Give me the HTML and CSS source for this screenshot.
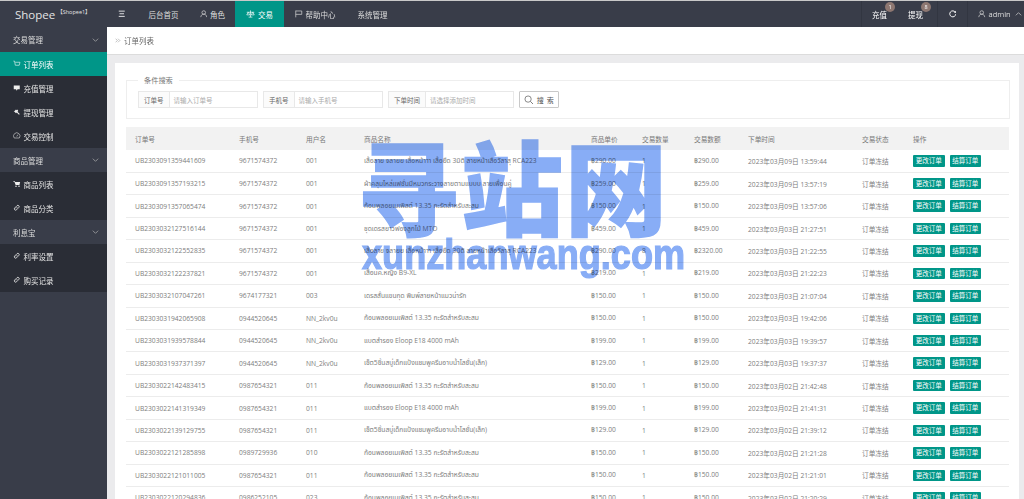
FILE: index.html
```html
<!DOCTYPE html>
<html lang="zh">
<head>
<meta charset="utf-8">
<title>Shopee</title>
<link rel="stylesheet" href="styles.css">
</head>
<body>
<div class="app">
  <header class="topbar">
    <div class="logo"><span class="logo-name">Shopee</span><span class="logo-sub">【Shopee1】</span></div>
    <nav class="nav">
      <a class="nav-toggle"><svg class="ic" viewBox="0 0 10 10"><path d="M1 1.5h8M2 5h6M1 8.5h8" fill="none" stroke="#fff" stroke-width="1.1"/></svg></a>
      <a class="nav-item">后台首页</a>
      <a class="nav-item"><svg class="ic" viewBox="0 0 10 10"><circle cx="5" cy="3.4" r="2.4" fill="none" stroke="#ddd" stroke-width=".9"/><path d="M1 9.5c.6-3 2-4 4-4s3.4 1 4 4" fill="none" stroke="#ddd" stroke-width=".9"/></svg>角色</a>
      <a class="nav-item active"><svg class="ic ic-wide" viewBox="0 0 12 10"><path d="M6 .5v9M1 3h10M3 3 1 6.5h4zM9 3 7 6.5h4zM3.5 9.5h5" fill="none" stroke="#fff" stroke-width=".9"/></svg>交易</a>
      <a class="nav-item"><svg class="ic" viewBox="0 0 10 10"><path d="M1 .8v9M1 1.300h8v4.500H1" fill="none" stroke="#ddd" stroke-width=".9"/></svg>帮助中心</a>
      <a class="nav-item">系统管理</a>
    </nav>
    <div class="tools">
      <a class="tool tool-text">充值<span class="badge">1</span></a>
      <a class="tool tool-text tool-joined">提现<span class="badge">8</span></a>
      <a class="tool tool-refresh"><svg class="ic" viewBox="0 0 10 10"><path d="M8.400 3A4 4 0 1 0 9 5.600" fill="none" stroke="#fff" stroke-width="1.300"/><path d="M9.600 .6v3.200H6.400z" fill="#fff"/></svg></a>
      <a class="tool tool-user"><svg class="ic" viewBox="0 0 10 10"><circle cx="5" cy="3.4" r="2.4" fill="none" stroke="#ddd" stroke-width=".9"/><path d="M1 9.5c.6-3 2-4 4-4s3.4 1 4 4" fill="none" stroke="#ddd" stroke-width=".9"/></svg>admin<svg class="chev-up" viewBox="0 0 10 6"><path d="M1 5 5 1l4 4" fill="none" stroke="#ddd" stroke-width="1"/></svg></a>
    </div>
  </header>
  <div class="body-row">
    <aside class="side">
      <div class="group group-first">交易管理<svg class="chev" viewBox="0 0 10 6"><path d="M1 1l4 4 4-4" fill="none" stroke="#bbb" stroke-width="1"/></svg></div>
      <a class="sub sub-active"><svg class="ic" viewBox="0 0 10 10"><path d="M.5 1.500h1.600l1 5.500h5.200l1-4H3" fill="none" stroke="#fff" stroke-width=".8"/></svg>订单列表</a>
      <a class="sub"><svg class="ic" viewBox="0 0 10 10"><path d="M1 2h8v5H6L5 9 4 7H1z" fill="#eee"/></svg>充值管理</a>
      <a class="sub"><svg class="ic" viewBox="0 0 10 10"><path d="M1 5l3-3 1 1 1-1 1 2-1 1 3 3-1 1-3-3-1 1-1-1-1-1z" fill="#eee"/></svg>提现管理</a>
      <a class="sub"><svg class="ic" viewBox="0 0 10 10"><path d="M1.600 8a4.300 4.300 0 1 1 6.800 0zM5 6l1.500-2.500" fill="none" stroke="#ddd" stroke-width=".8"/></svg>交易控制</a>
      <div class="group">商品管理<svg class="chev" viewBox="0 0 10 6"><path d="M1 1l4 4 4-4" fill="none" stroke="#bbb" stroke-width="1"/></svg></div>
      <a class="sub"><svg class="ic" viewBox="0 0 10 10"><path d="M.5 1.500h2l.4 1H9.500L8.600 6.500H3.500L2 2.500H.5z" fill="#eee"/><circle cx="4" cy="8.300" r="1" fill="#eee"/><circle cx="8" cy="8.300" r="1" fill="#eee"/></svg>商品列表</a>
      <a class="sub"><svg class="ic" viewBox="0 0 10 10"><path d="M4.200 5.800 5.800 4.200M3.800 3.800 5.300 2.300a1.600 1.600 0 0 1 2.400 2.400L6.200 6.200M3.800 3.800 2.300 5.300a1.600 1.600 0 0 0 2.400 2.400L6.200 6.200" fill="none" stroke="#eee" stroke-width="1.100"/></svg>商品分类</a>
      <div class="group">利息宝<svg class="chev" viewBox="0 0 10 6"><path d="M1 1l4 4 4-4" fill="none" stroke="#bbb" stroke-width="1"/></svg></div>
      <a class="sub"><svg class="ic" viewBox="0 0 10 10"><path d="M4.200 5.800 5.800 4.200M3.800 3.800 5.300 2.300a1.600 1.600 0 0 1 2.400 2.400L6.200 6.200M3.800 3.800 2.300 5.300a1.600 1.600 0 0 0 2.400 2.400L6.200 6.200" fill="none" stroke="#eee" stroke-width="1.100"/></svg>利率设置</a>
      <a class="sub"><svg class="ic" viewBox="0 0 10 10"><path d="M4.200 5.800 5.800 4.200M3.800 3.800 5.300 2.300a1.600 1.600 0 0 1 2.400 2.400L6.200 6.200M3.800 3.800 2.300 5.300a1.600 1.600 0 0 0 2.400 2.400L6.200 6.200" fill="none" stroke="#eee" stroke-width="1.100"/></svg>购买记录</a>
    </aside>
    <main class="main">
      <div class="crumb"><svg class="crumb-mark" viewBox="0 0 10 8"><path d="M1 1l3 3-3 3M5 1l3 3-3 3" fill="none" stroke="#999" stroke-width="1"/></svg>订单列表</div>
      <div class="content">
        <div class="panel">
          <fieldset class="search">
            <legend>条件搜索</legend>
            <div class="search-row">
              <div class="field f1"><span class="field-label">订单号</span><span class="field-input">请输入订单号</span></div>
              <div class="field f2"><span class="field-label">手机号</span><span class="field-input">请输入手机号</span></div>
              <div class="field f3"><span class="field-label">下单时间</span><span class="field-input">请选择添加时间</span></div>
              <button class="search-btn"><svg class="ic-search" viewBox="0 0 10 10"><circle cx="4.300" cy="4.300" r="3.300" fill="none" stroke="#666" stroke-width=".8"/><path d="M6.800 6.800 9.500 9.500" stroke="#666" stroke-width=".9"/></svg>搜 索</button>
            </div>
          </fieldset>
          <table class="orders">
            <colgroup>
              <col class="c1"><col class="c2"><col class="c3"><col class="c4"><col class="c5"><col class="c6"><col class="c7"><col class="c8"><col class="c9"><col class="c10">
            </colgroup>
            <thead>
              <tr><th>订单号</th><th>手机号</th><th>用户名</th><th>商品名称</th><th>商品单价</th><th>交易数量</th><th>交易数额</th><th>下单时间</th><th>交易状态</th><th>操作</th></tr>
            </thead>
            <tbody>
              <tr><td>UB2303091359441609</td><td>9671574372</td><td>001</td><td>เสื้อลาย จลายย เสื้อหน้าาา เสื้อยืด 3มิติ ลายหน้าเสือวัลาสุ RCA223</td><td>฿290.00</td><td>1</td><td>฿290.00</td><td>2023年03月09日 13:59:44</td><td>订单冻结</td><td class="ops"><a class="btn">更改订单</a><a class="btn">结算订单</a></td></tr>
              <tr><td>UB2303091357193215</td><td>9671574372</td><td>001</td><td>ผ้าคลุมไหล่แฟชั่นมีหมวกระวางลายตามแบบบ ลายเพื่อนคู่</td><td>฿259.00</td><td>1</td><td>฿259.00</td><td>2023年03月09日 13:57:19</td><td>订单冻结</td><td class="ops"><a class="btn">更改订单</a><a class="btn">结算订单</a></td></tr>
              <tr><td>UB2303091357065474</td><td>9671574372</td><td>001</td><td>ก้อนพลอยเมเพิสต์ 13.35 กะรัตสำหรับสะสม</td><td>฿150.00</td><td>1</td><td>฿150.00</td><td>2023年03月09日 13:57:06</td><td>订单冻结</td><td class="ops"><a class="btn">更改订单</a><a class="btn">结算订单</a></td></tr>
              <tr><td>UB2303032127516144</td><td>9671574372</td><td>001</td><td>ชุดเดรสยาวฟองลูกไม้ MTO</td><td>฿459.00</td><td>1</td><td>฿459.00</td><td>2023年03月03日 21:27:51</td><td>订单冻结</td><td class="ops"><a class="btn">更改订单</a><a class="btn">结算订单</a></td></tr>
              <tr><td>UB2303032122552835</td><td>9671574372</td><td>001</td><td>เสื้อลาย จลายย เสื้อหน้าาา เสื้อยืด 3มิติ ลายหน้าเสือวัลาสุ RCA223</td><td>฿290.00</td><td>8</td><td>฿2320.00</td><td>2023年03月03日 21:22:55</td><td>订单冻结</td><td class="ops"><a class="btn">更改订单</a><a class="btn">结算订单</a></td></tr>
              <tr><td>UB2303032122237821</td><td>9671574372</td><td>001</td><td>เสื้อนค.หญิง B9-XL</td><td>฿219.00</td><td>1</td><td>฿219.00</td><td>2023年03月03日 21:22:23</td><td>订单冻结</td><td class="ops"><a class="btn">更改订单</a><a class="btn">结算订单</a></td></tr>
              <tr><td>UB2303032107047261</td><td>9674177321</td><td>003</td><td>เดรสสั้นแขนกุด พิมพ์ลายหน้าแมวน่ารัก</td><td>฿150.00</td><td>1</td><td>฿150.00</td><td>2023年03月03日 21:07:04</td><td>订单冻结</td><td class="ops"><a class="btn">更改订单</a><a class="btn">结算订单</a></td></tr>
              <tr><td>UB2303031942065908</td><td>0944520645</td><td>NN_2kv0u</td><td>ก้อนพลอยเมเพิสต์ 13.35 กะรัตสำหรับสะสม</td><td>฿150.00</td><td>1</td><td>฿150.00</td><td>2023年03月03日 19:42:06</td><td>订单冻结</td><td class="ops"><a class="btn">更改订单</a><a class="btn">结算订单</a></td></tr>
              <tr><td>UB2303031939578844</td><td>0944520645</td><td>NN_2kv0u</td><td>แบตสำรอง Eloop E18 4000 mAh</td><td>฿199.00</td><td>1</td><td>฿199.00</td><td>2023年03月03日 19:39:57</td><td>订单冻结</td><td class="ops"><a class="btn">更改订单</a><a class="btn">结算订单</a></td></tr>
              <tr><td>UB2303031937371397</td><td>0944520645</td><td>NN_2kv0u</td><td>เซ็ต5ชิ้นสบู่เด็กแป้งแชมพูครีมอาบน้ำโลชั่น(เล็ก)</td><td>฿129.00</td><td>1</td><td>฿129.00</td><td>2023年03月03日 19:37:37</td><td>订单冻结</td><td class="ops"><a class="btn">更改订单</a><a class="btn">结算订单</a></td></tr>
              <tr><td>UB2303022142483415</td><td>0987654321</td><td>011</td><td>ก้อนพลอยเมเพิสต์ 13.35 กะรัตสำหรับสะสม</td><td>฿150.00</td><td>1</td><td>฿150.00</td><td>2023年03月02日 21:42:48</td><td>订单冻结</td><td class="ops"><a class="btn">更改订单</a><a class="btn">结算订单</a></td></tr>
              <tr><td>UB2303022141319349</td><td>0987654321</td><td>011</td><td>แบตสำรอง Eloop E18 4000 mAh</td><td>฿199.00</td><td>1</td><td>฿199.00</td><td>2023年03月02日 21:41:31</td><td>订单冻结</td><td class="ops"><a class="btn">更改订单</a><a class="btn">结算订单</a></td></tr>
              <tr><td>UB2303022139129755</td><td>0987654321</td><td>011</td><td>เซ็ต5ชิ้นสบู่เด็กแป้งแชมพูครีมอาบน้ำโลชั่น(เล็ก)</td><td>฿129.00</td><td>1</td><td>฿129.00</td><td>2023年03月02日 21:39:12</td><td>订单冻结</td><td class="ops"><a class="btn">更改订单</a><a class="btn">结算订单</a></td></tr>
              <tr><td>UB2303022121285898</td><td>0989729936</td><td>010</td><td>ก้อนพลอยเมเพิสต์ 13.35 กะรัตสำหรับสะสม</td><td>฿150.00</td><td>1</td><td>฿150.00</td><td>2023年03月02日 21:21:28</td><td>订单冻结</td><td class="ops"><a class="btn">更改订单</a><a class="btn">结算订单</a></td></tr>
              <tr><td>UB2303022121011005</td><td>0987654321</td><td>011</td><td>ก้อนพลอยเมเพิสต์ 13.35 กะรัตสำหรับสะสม</td><td>฿150.00</td><td>1</td><td>฿150.00</td><td>2023年03月02日 21:21:01</td><td>订单冻结</td><td class="ops"><a class="btn">更改订单</a><a class="btn">结算订单</a></td></tr>
              <tr><td>UB2303022120294836</td><td>0986252105</td><td>023</td><td>ก้อนพลอยเมเพิสต์ 13.35 กะรัตสำหรับสะสม</td><td>฿150.00</td><td>1</td><td>฿150.00</td><td>2023年03月02日 21:20:29</td><td>订单冻结</td><td class="ops"><a class="btn">更改订单</a><a class="btn">结算订单</a></td></tr>
            </tbody>
          </table>
        </div>
      </div>
    </main>
  </div>
</div>
<div class="watermark"><div class="wm-cn">寻站网</div><div class="wm-en">xunzhanwang.com</div></div>
</body>
</html>
```
FILE: styles.css
```css
* { box-sizing: border-box; }
html, body { margin: 0; height: 499px; overflow: hidden; background: #fff; }
body { position: relative; font-family: "Open Sans", "Noto Sans CJK SC", "Noto Sans Thai", sans-serif; color: #666; }
a { color: inherit; text-decoration: none; }

.app { height: 499px; display: flex; flex-direction: column; filter: blur(.4px); }

.topbar { flex: 0 0 27px; display: flex; align-items: stretch; background: #393d49; border-top: 1px solid #c9c9c9; color: #ddd; }
.logo { flex: 0 0 107px; display: flex; align-items: center; padding-left: 15px; color: #e4e4e4; }
.logo-name { font-size: 11.5px; }
.logo-sub { font-size: 5.5px; margin: -4px 0 0 2px; white-space: nowrap; }
.nav { display: flex; align-items: stretch; font-size: 7.5px; }
.nav a { display: flex; align-items: center; }
.nav-toggle { padding: 0 11px; }
.nav-item { padding: 0 11px; }
.nav-toggle + .nav-item { padding: 0 10px 0 12px; }
.nav-toggle + .nav-item + .nav-item { padding-right: 10px; }
.nav-item.active { background: #009688; color: #fff; }
.ic { width: 7.5px; height: 7.5px; margin-right: 3px; flex: none; }
.ic-wide { width: 9px; }
.nav-toggle .ic { margin: 0; }

.tools { margin-left: auto; display: flex; align-items: stretch; font-size: 7.5px; }
.tool { display: flex; align-items: center; position: relative; border-left: 1px solid #323641; }
.tool-text { width: 37px; padding-left: 10px; color: #fff; }
.tool-joined { width: 39px; border-left: 0; }
.tool-refresh { width: 30px; justify-content: center; }
.tool-refresh .ic { margin: 0; }
.tool-user { width: 57px; padding-left: 10px; font-family: "Open Sans", sans-serif; font-size: 7.5px; }
.chev-up { width: 7px; height: 4px; margin-left: 4px; }
.badge { position: absolute; left: 23px; top: 1px; width: 10px; height: 10px; border-radius: 50%; background: #8d7771; color: #fff; font-size: 5.5px; line-height: 10px; text-align: center; }

.body-row { flex: 1; display: flex; min-height: 0; }
.side { flex: 0 0 107px; background: #393d49; color: #ddd; font-size: 7.5px; }
.group { height: 24px; display: flex; align-items: center; justify-content: space-between; padding: 0 8px 0 13px; background: #393d49; }
.group-first { height: 25px; }
.chev { width: 7px; height: 4px; }
.sub { height: 24px; display: flex; align-items: center; padding-left: 13px; background: #2a2d36; color: #e4e4e4; }
.sub-active { background: #009688; color: #fff; }

.main { flex: 1; min-width: 0; display: flex; flex-direction: column; background: #ebebed; }
.crumb { flex: 0 0 28px; display: flex; align-items: center; padding-left: 8px; background: #fff; border-bottom: 1px solid #dcdcdc; font-size: 7.5px; color: #666; }
.crumb-mark { width: 6px; height: 5px; margin-right: 3px; }
.content { flex: 1; min-height: 0; padding: 8px 5px 0 8px; overflow: hidden; }
.panel { height: 100%; background: #fff; padding: 13px 9px 0 11px; }

.search { margin: 0; padding: 7px 0 10px 11px; border: 1px solid #eee; min-width: 0; }
.search legend { margin-left: 0; padding: 0 6px; font-size: 7.2px; line-height: 8px; color: #777; }
.search-row { display: flex; align-items: stretch; height: 17px; }
.field { display: flex; height: 17px; border: 1px solid #e8e8e8; font-size: 6.5px; margin-right: 5px; }
.f1 { width: 120px; }
.f2 { width: 120px; }
.f3 { width: 126px; }
.field-label { display: flex; align-items: center; padding: 0 5px; background: #fbfbfb; border-right: 1px solid #e8e8e8; color: #666; white-space: nowrap; }
.field-input { display: flex; align-items: center; padding-left: 4px; color: #aaa; white-space: nowrap; }
.search-btn { width: 40px; height: 17px; padding: 0; display: flex; align-items: center; justify-content: center; background: #fff; border: 1px solid #c9c9c9; border-radius: 1px; color: #555; font: 7px "Open Sans", "Noto Sans CJK SC", sans-serif; word-spacing: 1px; }
.ic-search { width: 9.5px; height: 9.5px; margin-right: 3px; }

.orders { width: 883px; margin-top: 8px; border-collapse: collapse; table-layout: fixed; font-size: 6.7px; }
.orders th { height: 23px; padding: 0 0 0 9px; background: #f2f2f2; border: 0; text-align: left; font-weight: 400; color: #777; }
.orders td { height: 22.45px; padding: 0 0 0 9px; border-bottom: 1px solid #ececec; color: #7d7d7d; white-space: nowrap; overflow: hidden; }
.c1 { width: 104px; } .c2 { width: 67px; } .c3 { width: 58px; } .c4 { width: 227px; } .c5 { width: 51px; }
.c6 { width: 52px; } .c7 { width: 54px; } .c8 { width: 114px; } .c9 { width: 51px; } .c10 { width: 105px; }
.orders .ops { padding-left: 9px; }
.btn { display: inline-block; width: 31.5px; height: 11.5px; line-height: 11.5px; margin-right: 5px; border-radius: 1px; background: #009688; color: #fff; text-align: center; font-size: 6.5px; vertical-align: middle; }

.watermark { position: absolute; left: 362px; top: 128px; width: 293px; color: #88adf6; pointer-events: none; mix-blend-mode: multiply; }
.wm-cn { font: 900 102px/112px "Noto Sans CJK SC", sans-serif; white-space: nowrap; letter-spacing: 2px; margin-left: -5px; -webkit-text-stroke: 1.5px #88adf6; }
.wm-en { font: 700 42px/46px "Liberation Sans", sans-serif; white-space: nowrap; margin-top: -8px; transform: scaleX(.86); transform-origin: left center; -webkit-text-stroke: 1.2px #88adf6; }
```
